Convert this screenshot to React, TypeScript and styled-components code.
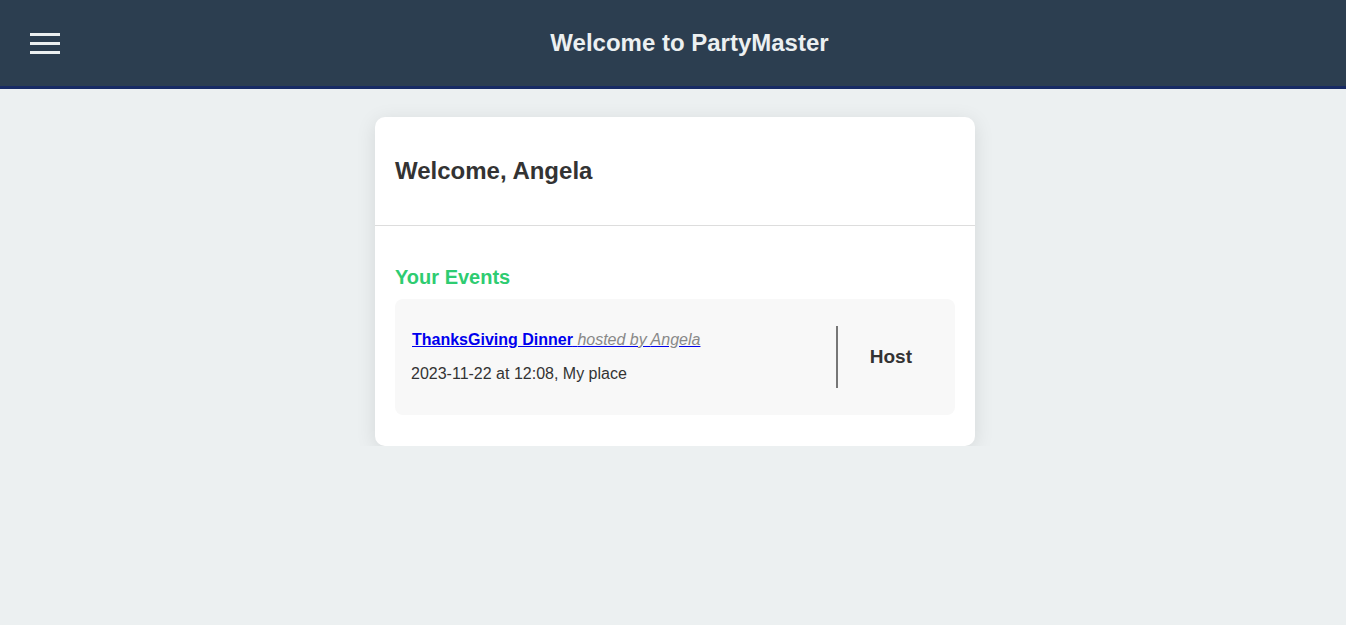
import React from 'react';
import styled, { createGlobalStyle } from 'styled-components';

const GlobalStyle = createGlobalStyle`
  body {
    margin: 0;
    background: #ecf0f1;
    font-family: "Liberation Sans", Arial, sans-serif;
    color: #333;
  }
`;

interface EventItem {
  id: number;
  name: string;
  host: string;
  date: string;
  time: string;
  place: string;
  role: string;
}

const events: EventItem[] = [
  {
    id: 1,
    name: 'ThanksGiving Dinner',
    host: 'Angela',
    date: '2023-11-22',
    time: '12:08',
    place: 'My place',
    role: 'Host',
  },
];

const App: React.FC = () => {
  return (
    <>
      <GlobalStyle />
      <Header>
        <MenuButton aria-label="menu">
          <MenuBar />
          <MenuBar />
          <MenuBar />
        </MenuButton>
        <HeaderTitle>Welcome to PartyMaster</HeaderTitle>
      </Header>
      <Main>
        <Card>
          <CardTop>
            <Greeting>Welcome, Angela</Greeting>
          </CardTop>
          <CardBody>
            <SectionTitle>Your Events</SectionTitle>
            {events.map((ev) => (
              <EventRow key={ev.id}>
                <EventInfo>
                  <EventLink href="#">
                    {ev.name} <HostedBy>hosted by {ev.host}</HostedBy>
                  </EventLink>
                  <EventMeta>
                    {ev.date} at {ev.time}, {ev.place}
                  </EventMeta>
                </EventInfo>
                <RoleCol>{ev.role}</RoleCol>
              </EventRow>
            ))}
          </CardBody>
        </Card>
      </Main>
    </>
  );
};

export default App;

// styles
const Header = styled.header`
  height: 86px;
  padding: 0 30px;
  background: #2c3e50;
  border-bottom: 3px solid #172a64;
  display: flex;
  align-items: center;
`;

const MenuButton = styled.button`
  width: 30px;
  margin-right: 3px;
  padding: 0;
  border: none;
  background: none;
  display: flex;
  flex-direction: column;
  gap: 6px;
  cursor: pointer;
`;

const MenuBar = styled.span`
  display: block;
  width: 30px;
  height: 3px;
  background: #ecf0f1;
`;

const HeaderTitle = styled.h1`
  flex: 1;
  margin: 0;
  text-align: center;
  font-size: 24px;
  font-weight: 700;
  color: #ecf0f1;
`;

const Main = styled.main`
  display: flex;
  justify-content: center;
  padding: 28px 0 0 4px;
`;

const Card = styled.div`
  width: 600px;
  background: #fff;
  border-radius: 10px;
  box-shadow: 0 4px 20px rgba(0, 0, 0, 0.1);
`;

const CardTop = styled.div`
  height: 108px;
  padding: 0 20px;
  display: flex;
  align-items: center;
  border-bottom: 1px solid #ddd;
`;

const Greeting = styled.h2`
  margin: 0;
  font-size: 24px;
  font-weight: 700;
  color: #333;
`;

const CardBody = styled.div`
  padding: 39px 20px 31px;
`;

const SectionTitle = styled.h3`
  margin: 0 0 10px;
  font-size: 20px;
  line-height: 24px;
  font-weight: 700;
  color: #2ecc71;
`;

const EventRow = styled.div`
  height: 116px;
  box-sizing: border-box;
  padding: 0 43px 0 16px;
  background: #f8f8f8;
  border-radius: 8px;
  display: flex;
  align-items: center;
`;

const EventInfo = styled.div`
  flex: 1;
  display: flex;
  flex-direction: column;
  gap: 16px;
  font-size: 16px;
  line-height: 18px;
`;

const EventLink = styled.a`
  color: #0000ee;
  font-weight: 700;
  text-decoration: underline;
  margin-left: 1px;
`;

const HostedBy = styled.span`
  color: #888;
  font-weight: 400;
  font-style: italic;
`;

const EventMeta = styled.span`
  color: #333;
`;

const RoleCol = styled.div`
  height: 62px;
  border-left: 2px solid #777;
  padding-left: 32px;
  display: flex;
  align-items: center;
  font-size: 19px;
  font-weight: 700;
  color: #333;
`;
